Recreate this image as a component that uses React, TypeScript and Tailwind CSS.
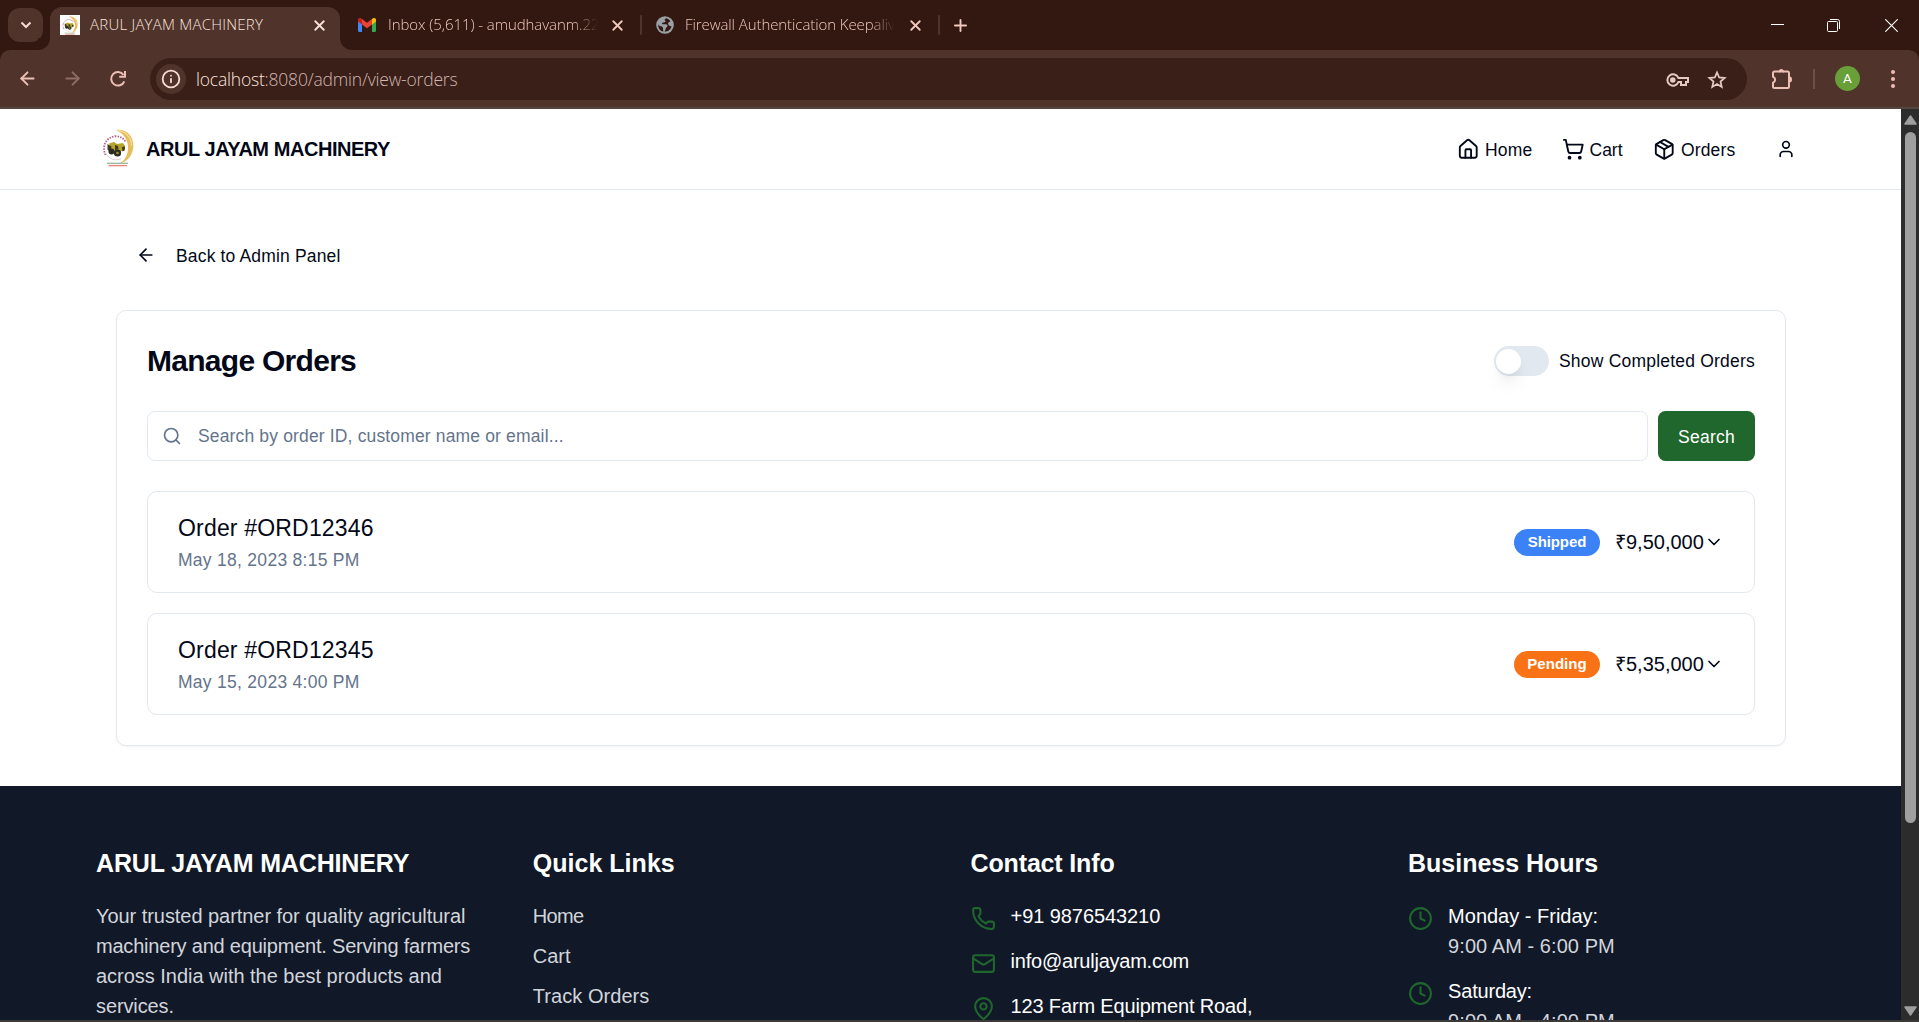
import {
  ArrowLeft,
  ArrowRight,
  ChevronDown,
  Clock,
  House,
  Info,
  Mail,
  MapPin,
  Package,
  Phone,
  Plus,
  Search,
  ShoppingCart,
  User,
  X,
} from "lucide-react";

function Logo({ className }: { className: string }) {
  return (
    <svg viewBox="0 0 32 38" className={className}>
      <path d="M14 1C24-.5 31.500 6.500 31.300 17 31 26 25.500 32.500 18 34.500 23.500 30.500 26.500 24.500 26 17.500 25.500 10 21.500 4.500 14 1z" fill="#e8bc58" />
      <path d="M15 1.500C23 1.500 29.500 8 29.500 17" fill="none" stroke="#f5dc9c" strokeWidth="1.300" />
      <path d="M3.500 26C-.5 17 4 8.500 13 7.200c5 0 8.500 2 10.500 5.500" fill="none" stroke="#b8648a" strokeWidth="1.800" strokeDasharray="1.500 1.200" />
      <path d="M3.500 24c3 6 10 8.500 16 5.500" fill="none" stroke="#d9cfd3" strokeWidth="1" />
      <path d="M7 14.500l5-1.500 3 2 6-1 2 3v4l-6 2-8-1z" fill="#b5a32a" />
      <path d="M5.500 15l4 2.500-1 6-3-3zM13 16l3 1 .5 3-3.500 1zM20 18l3-.5-.5 4-2 1z" fill="#3d3a1e" />
      <circle cx="9.500" cy="22.500" r="3" fill="#2a2a20" />
      <circle cx="15.500" cy="24" r="3.600" fill="#2b2a22" />
      <circle cx="15.500" cy="24" r="1.300" fill="#a0932c" />
      <path d="M5 34.300h21" stroke="#8fb093" strokeWidth="1.200" />
      <path d="M6.500 36.600h18.500" stroke="#ee857d" strokeWidth="1.400" />
    </svg>
  );
}

function GmailIcon() {
  return (
    <svg viewBox="0 0 18 14" className="h-[14px] w-[18px] shrink-0">
      <path d="M0 2v10.800C0 13.500.5 14 1.200 14H4V5z" fill="#4285f4" />
      <path d="M14 14h2.800c.7 0 1.200-.5 1.200-1.200V2l-4 3z" fill="#34a853" />
      <path d="M14 1v5.500l4-3V2c0-1.700-1.700-2.500-3-1.700z" fill="#fbbc04" />
      <path d="M4 6.500V1l5 3.800L14 1v5.500l-5 3.700z" fill="#ea4335" />
      <path d="M0 2v1.500l4 3V1L3 .3C1.700-.5 0 .3 0 2z" fill="#c5221f" />
    </svg>
  );
}

function GlobeIcon() {
  return (
    <svg viewBox="0 0 18 18" className="size-[18px] shrink-0">
      <circle cx="9" cy="9" r="8.800" fill="#9aa0a6" />
      <path
        d="M10.500 2.200c-2 .3-2.300 1.800-1.200 2.600 1 .6-.3 1.700-1.800 1.600-1.700 0-2 1.700-.6 1.900h3.300c1.600.3 1.800 2 .7 2.700-1.500.8-1 2.500-2.400 4.700 4-.2 6.500-2.500 7-5.700-1.800.6-2.700-.6-3.300-1.700-.7-1.300.8-2.500 2.300-2.700-.8-1.700-2.200-2.900-4-3.400zM2.200 8.200c.4 1.700 2.600 1.800 4 2.500 1 .6.600 2.200 1 3.300.2.800.2 1.300-.1 1.600C4 14.800 1.900 11.800 2.200 8.200z"
        fill="#331811"
      />
    </svg>
  );
}

function Flare({ side }: { side: "left" | "right" }) {
  return (
    <div className="h-3 w-3 self-end bg-[#50342c]">
      <div className={side === "left" ? "size-full rounded-br-xl bg-[#331811]" : "size-full rounded-bl-xl bg-[#331811]"} />
    </div>
  );
}

function TabStrip() {
  return (
    <div className="flex h-[50px] items-stretch bg-[#331811] text-[15px] text-[#f0c8bd]">
      <div className="mt-2 ml-2 flex h-[34px] w-[35px] items-center justify-center rounded-xl bg-[#50342c]">
        <svg viewBox="0 0 12 8" className="h-2 w-3" fill="none" stroke="#f6dcd5" strokeWidth="2">
          <path d="M1.500 1.500L6 6l4.500-4.500" />
        </svg>
      </div>
      <div className="-ml-[5px] flex items-stretch">
        <Flare side="left" />
      </div>
      <div className="mt-[7px] flex w-[290px] items-center rounded-t-xl bg-[#50342c] pb-[7px] pl-[10px] text-[#f9e3dc]">
        <div className="flex size-5 items-center justify-center bg-white">
          <Logo className="h-[19px] w-[16px]" />
        </div>
        <span className="mb-[2px] ml-[10px] w-[221px] tracking-[0.23px] whitespace-nowrap">ARUL JAYAM MACHINERY</span>
        <X className="size-[17px]" strokeWidth={2.6} />
      </div>
      <Flare side="right" />
      <div className="flex items-center">
        <div className="w-[6px]" />
        <GmailIcon />
        <span className="mb-[2px] ml-[12px] w-[210px] tracking-[-0.07px] whitespace-nowrap [mask-image:linear-gradient(to_right,black_88%,transparent)]">
          Inbox (5,611) - amudhavanm.22
        </span>
        <X className="ml-[11px] size-[17px]" strokeWidth={2.6} />
        <div className="ml-[14px] h-5 w-[2px] rounded bg-[#50342c]" />
        <div className="w-[14px]" />
        <GlobeIcon />
        <span className="mb-[2px] ml-[11px] w-[210px] tracking-[-0.08px] whitespace-nowrap [mask-image:linear-gradient(to_right,black_88%,transparent)]">
          Firewall Authentication Keepaliv
        </span>
        <X className="ml-[12px] size-[17px]" strokeWidth={2.6} />
        <div className="ml-[14px] h-5 w-[2px] rounded bg-[#50342c]" />
        <Plus className="ml-[11px] size-[19px]" strokeWidth={2.4} />
      </div>
      <div className="ml-auto flex items-center pr-[21px]">
        <svg viewBox="0 0 13 13" className="size-[13px]" stroke="#fff" strokeWidth="1">
          <path d="M0 5.500h13" />
        </svg>
        <svg viewBox="0 0 13 13" className="ml-[43px] size-[13px]" fill="none" stroke="#fff" strokeWidth="1">
          <path d="M3 .5h7.500a2 2 0 0 1 2 2V10" />
          <rect x=".5" y="2.500" width="10" height="10" rx="1" />
        </svg>
        <svg viewBox="0 0 13 13" className="ml-[45px] size-[13px]" stroke="#fff" strokeWidth="1.100">
          <path d="M.3.3l12.400 12.400M12.700.3L.3 12.700" />
        </svg>
      </div>
    </div>
  );
}

function Toolbar() {
  return (
    <div className="bg-[#331811]">
      <div className="flex h-[59px] items-center rounded-t-[10px] border-b-2 border-[#54463f] bg-[#50342c] pl-[17px] text-[#eebfb3]">
        <ArrowLeft className="size-[21px]" strokeWidth={2.2} />
        <ArrowRight className="ml-[24px] size-[21px] text-[#8d6d64]" strokeWidth={2.2} />
        <svg viewBox="0 0 20 20" className="ml-[25px] size-5" fill="none" stroke="currentColor" strokeWidth="2">
          <path d="M16.300 12.300A6.800 6.800 0 1 1 15.500 5.800" />
          <path d="M17 2v5.800h-5.800" />
        </svg>
        <div className="ml-[22px] flex h-[42px] w-[1597px] items-center rounded-full bg-[#3a1f19] pl-[6px]">
          <div className="flex size-[30px] items-center justify-center rounded-full bg-[#50342c]">
            <Info className="size-5 text-[#f6dcd5]" strokeWidth={2.2} />
          </div>
          <span className="mt-[2px] ml-[10px] text-[17.500px] tracking-[-0.2px] whitespace-nowrap text-[#d0b6ae]">
            <span className="text-[#fbe5df]">localhost</span>:8080/admin/view-orders
          </span>
          <svg viewBox="0 0 23 14" className="mt-[2px] ml-auto h-[14px] w-[23px]" fill="none" stroke="#e2c9c2" strokeWidth="2">
            <path d="M12.400 5A5.700 5.700 0 1 0 12.400 9H15v3h5V9h2V5z" />
            <circle cx="6.800" cy="7" r="1.800" fill="#e2c9c2" />
          </svg>
          <svg viewBox="0 0 20 20" className="mt-[2px] mr-5 ml-[18px] size-5" fill="none" stroke="#e2c9c2" strokeWidth="1.800">
            <path d="M10 2.500l2.200 5 5.400.5-4.100 3.600 1.200 5.300L10 14.100l-4.700 2.800 1.200-5.300L2.400 8l5.400-.5z" />
          </svg>
        </div>
        <svg viewBox="0 0 24 24" className="ml-[23px] size-6" fill="none" stroke="currentColor" strokeWidth="2" strokeLinejoin="round">
          <path d="M4.500 4.500h5a1.900 1.900 0 0 1 3.600 0h4.400a1.500 1.500 0 0 1 1.500 1.500v4.600a1.900 1.900 0 0 1 0 3.800V19.500a1.500 1.500 0 0 1-1.500 1.500h-13A1.500 1.500 0 0 1 3 19.500v-3.800a3.200 3.200 0 0 0 0-6V6a1.500 1.500 0 0 1 1.500-1.500z" />
          <path d="M9.500 4.500a1.900 1.900 0 0 1 3.600 0zM19 10.600a1.900 1.900 0 0 1 0 3.800z" fill="currentColor" />
        </svg>
        <div className="ml-[19px] h-5 w-[2px] bg-[#6f4f46]" />
        <div className="ml-[20px] flex size-[25px] items-center justify-center rounded-full bg-[#689f38] font-['Roboto',sans-serif] text-[13.500px] font-normal text-white">
          A
        </div>
        <svg viewBox="0 0 4 18" className="ml-[31px] h-[18px] w-1" fill="currentColor">
          <circle cx="2" cy="2" r="2" />
          <circle cx="2" cy="9" r="2" />
          <circle cx="2" cy="16" r="2" />
        </svg>
      </div>
    </div>
  );
}

function SiteHeader() {
  return (
    <header className="flex h-[81px] items-center border-b border-[#e2e8f0] pl-[102px] text-[#020817]">
      <Logo className="mt-[-3px] h-[38px] w-8" />
      <span className="ml-3 text-[20px] font-bold tracking-[-0.45px] whitespace-nowrap">ARUL JAYAM MACHINERY</span>
      <nav className="mr-[105px] ml-auto flex items-center text-[17.500px]">
        <House className="size-[22.500px]" />
        <span className="mt-[2px] ml-[6px] w-[47px] tracking-[0.2px]">Home</span>
        <ShoppingCart className="ml-[30px] size-[22.500px]" />
        <span className="mt-[2px] ml-[5px] w-[34px]">Cart</span>
        <Package className="ml-[29px] size-[22.500px]" />
        <span className="mt-[2px] ml-[6px] w-[55px] tracking-[0.15px]">Orders</span>
        <User className="ml-[40px] size-5" />
      </nav>
    </header>
  );
}

const orders = [
  { id: "ORD12346", date: "May 18, 2023 8:15 PM", status: "Shipped", badge: "bg-[#3b82f6] tracking-[-0.1px]", total: "₹9,50,000" },
  { id: "ORD12345", date: "May 15, 2023 4:00 PM", status: "Pending", badge: "bg-[#f97316] tracking-[0.06px]", total: "₹5,35,000" },
];

function OrdersPanel() {
  return (
    <section className="mt-[34px] h-[436px] rounded-[10px] border border-[#e2e8f0] px-[30px] pt-[30px] shadow-[0_1px_2px_rgba(0,0,0,0.05)]">
      <div className="flex h-10 items-center justify-between">
        <h1 className="-mt-[1px] text-[30px] font-bold tracking-[-0.72px]">Manage Orders</h1>
        <div className="flex items-center">
          <div className="flex h-[30px] w-[55px] items-center rounded-full bg-[#e2e8f0] px-[2.500px]">
            <div className="size-[25px] rounded-full bg-white shadow-[0_12px_18px_-4px_rgba(0,0,0,0.1),0_5px_8px_-5px_rgba(0,0,0,0.1)]" />
          </div>
          <span className="ml-[10px] text-[17.500px] tracking-[0.21px]">Show Completed Orders</span>
        </div>
      </div>
      <div className="mt-[30px] flex h-[50px] gap-[10px]">
        <div className="flex flex-1 items-center rounded-[7.500px] border border-[#e2e8f0] pl-[14px] text-[#64748b]">
          <Search className="size-5" />
          <span className="ml-[16px] text-[17.500px] tracking-[0.152px]">Search by order ID, customer name or email...</span>
        </div>
        <button className="w-[97px] rounded-[7.500px] bg-[#1f672c] pt-[2px] text-[17.500px] tracking-[0.25px] text-white">Search</button>
      </div>
      <div className="mt-[30px] flex flex-col gap-5">
        {orders.map((o) => (
          <div key={o.id} className="flex h-[102px] items-center rounded-[10px] border border-[#e2e8f0] px-[30px]">
            <div>
              <div className="-mt-[1px] text-[23px] leading-[35px] tracking-[0.18px]">Order #{o.id}</div>
              <div className="mt-[1px] text-[17.500px] leading-[26px] tracking-[0.28px] text-[#64748b]">{o.date}</div>
            </div>
            <span className={`ml-auto flex h-[27px] w-[86px] items-center justify-center rounded-full text-[15px] font-bold text-white ${o.badge}`}>
              {o.status}
            </span>
            <span className="ml-[15px] w-[89px] text-[20px] whitespace-nowrap">{o.total}</span>
            <ChevronDown className="size-5" />
          </div>
        ))}
      </div>
    </section>
  );
}

function Footer() {
  return (
    <footer className="h-[234px] overflow-hidden bg-[#111827] pt-[60px] pl-24 text-[20px] leading-[30px] text-white">
      <div className="grid grid-cols-[396.800px_397.800px_397.500px_397.300px] gap-x-10">
        <div>
          <h3 className="mb-5 text-[25px] leading-[35px] font-bold tracking-[-0.15px] whitespace-nowrap">ARUL JAYAM MACHINERY</h3>
          <p className="whitespace-nowrap text-[#d1d5db]">
            <span className="block tracking-[-0.051px]">Your trusted partner for quality agricultural</span>
            <span className="block tracking-[-0.208px]">machinery and equipment. Serving farmers</span>
            <span className="block tracking-[-0.025px]">across India with the best products and</span>
            <span className="block tracking-[-0.106px]">services.</span>
          </p>
        </div>
        <div>
          <h3 className="mb-5 text-[25px] leading-[35px] font-bold tracking-[0.02px]">Quick Links</h3>
          <ul className="flex flex-col gap-[10px] text-[#d1d5db]">
            <li className="tracking-[-0.7px]">Home</li>
            <li>Cart</li>
            <li className="tracking-[0.05px]">Track Orders</li>
          </ul>
        </div>
        <div>
          <h3 className="mb-5 text-[25px] leading-[35px] font-bold tracking-[-0.16px]">Contact Info</h3>
          <div className="flex flex-col gap-[15px]">
            <div className="flex gap-[15px]">
              <Phone className="mt-[5px] size-[25px] text-[#1f672c]" />
              <span className="tracking-[-0.08px]">+91 9876543210</span>
            </div>
            <div className="flex gap-[15px]">
              <Mail className="mt-[5px] size-[25px] text-[#1f672c]" />
              <span className="tracking-[-0.231px]">info@aruljayam.com</span>
            </div>
            <div className="flex gap-[15px]">
              <MapPin className="mt-[5px] size-[25px] text-[#1f672c]" />
              <span className="tracking-[-0.162px]">123 Farm Equipment Road,</span>
            </div>
          </div>
        </div>
        <div>
          <h3 className="mb-5 text-[25px] leading-[35px] font-bold tracking-[-0.03px]">Business Hours</h3>
          <div className="flex flex-col gap-[15px]">
            <div className="flex gap-[15px]">
              <Clock className="mt-[5px] size-[25px] text-[#1f672c]" />
              <div>
                <p>Monday - Friday:</p>
                <p className="tracking-[0.06px] text-[#d1d5db]">9:00 AM - 6:00 PM</p>
              </div>
            </div>
            <div className="flex gap-[15px]">
              <Clock className="mt-[5px] size-[25px] text-[#1f672c]" />
              <div>
                <p className="tracking-[-0.2px]">Saturday:</p>
                <p className="tracking-[0.06px] text-[#d1d5db]">9:00 AM - 4:00 PM</p>
              </div>
            </div>
          </div>
        </div>
      </div>
    </footer>
  );
}

function Scrollbar() {
  return (
    <div className="flex w-[18px] flex-col items-center bg-[#2c2c2c] pt-[6px] pb-[4px]">
      <svg viewBox="0 0 13 10" className="h-[10px] w-[13px]">
        <path d="M6.500 1L12 9H1z" fill="#9f9f9f" stroke="#9f9f9f" strokeWidth="1.500" strokeLinejoin="round" />
      </svg>
      <div className="mt-[7px] h-[691px] w-[11px] rounded-full bg-[#9f9f9f]" />
      <svg viewBox="0 0 13 10" className="mt-auto h-[10px] w-[13px]">
        <path d="M6.500 9L12 1H1z" fill="#9f9f9f" stroke="#9f9f9f" strokeWidth="1.500" strokeLinejoin="round" />
      </svg>
    </div>
  );
}

export default function App() {
  return (
    <div className="flex h-[1022px] w-[1919px] flex-col overflow-hidden bg-white">
      <div className="font-['Open_Sans',sans-serif] font-light">
        <TabStrip />
        <Toolbar />
      </div>
      <div className="flex h-[911px] font-['Liberation_Sans',sans-serif] text-[#020817]">
        <div className="flex-1">
          <SiteHeader />
          <main className="h-[596px] pt-[44px] pr-[115px] pl-[116px]">
            <div className="flex h-[42px] items-center pl-5 text-[17.500px]">
              <ArrowLeft className="size-5" />
              <span className="mt-[2px] ml-5 tracking-[0.16px]">Back to Admin Panel</span>
            </div>
            <OrdersPanel />
          </main>
          <Footer />
        </div>
        <Scrollbar />
      </div>
      <div className="h-[2px] bg-[#3c3a39]" />
    </div>
  );
}
